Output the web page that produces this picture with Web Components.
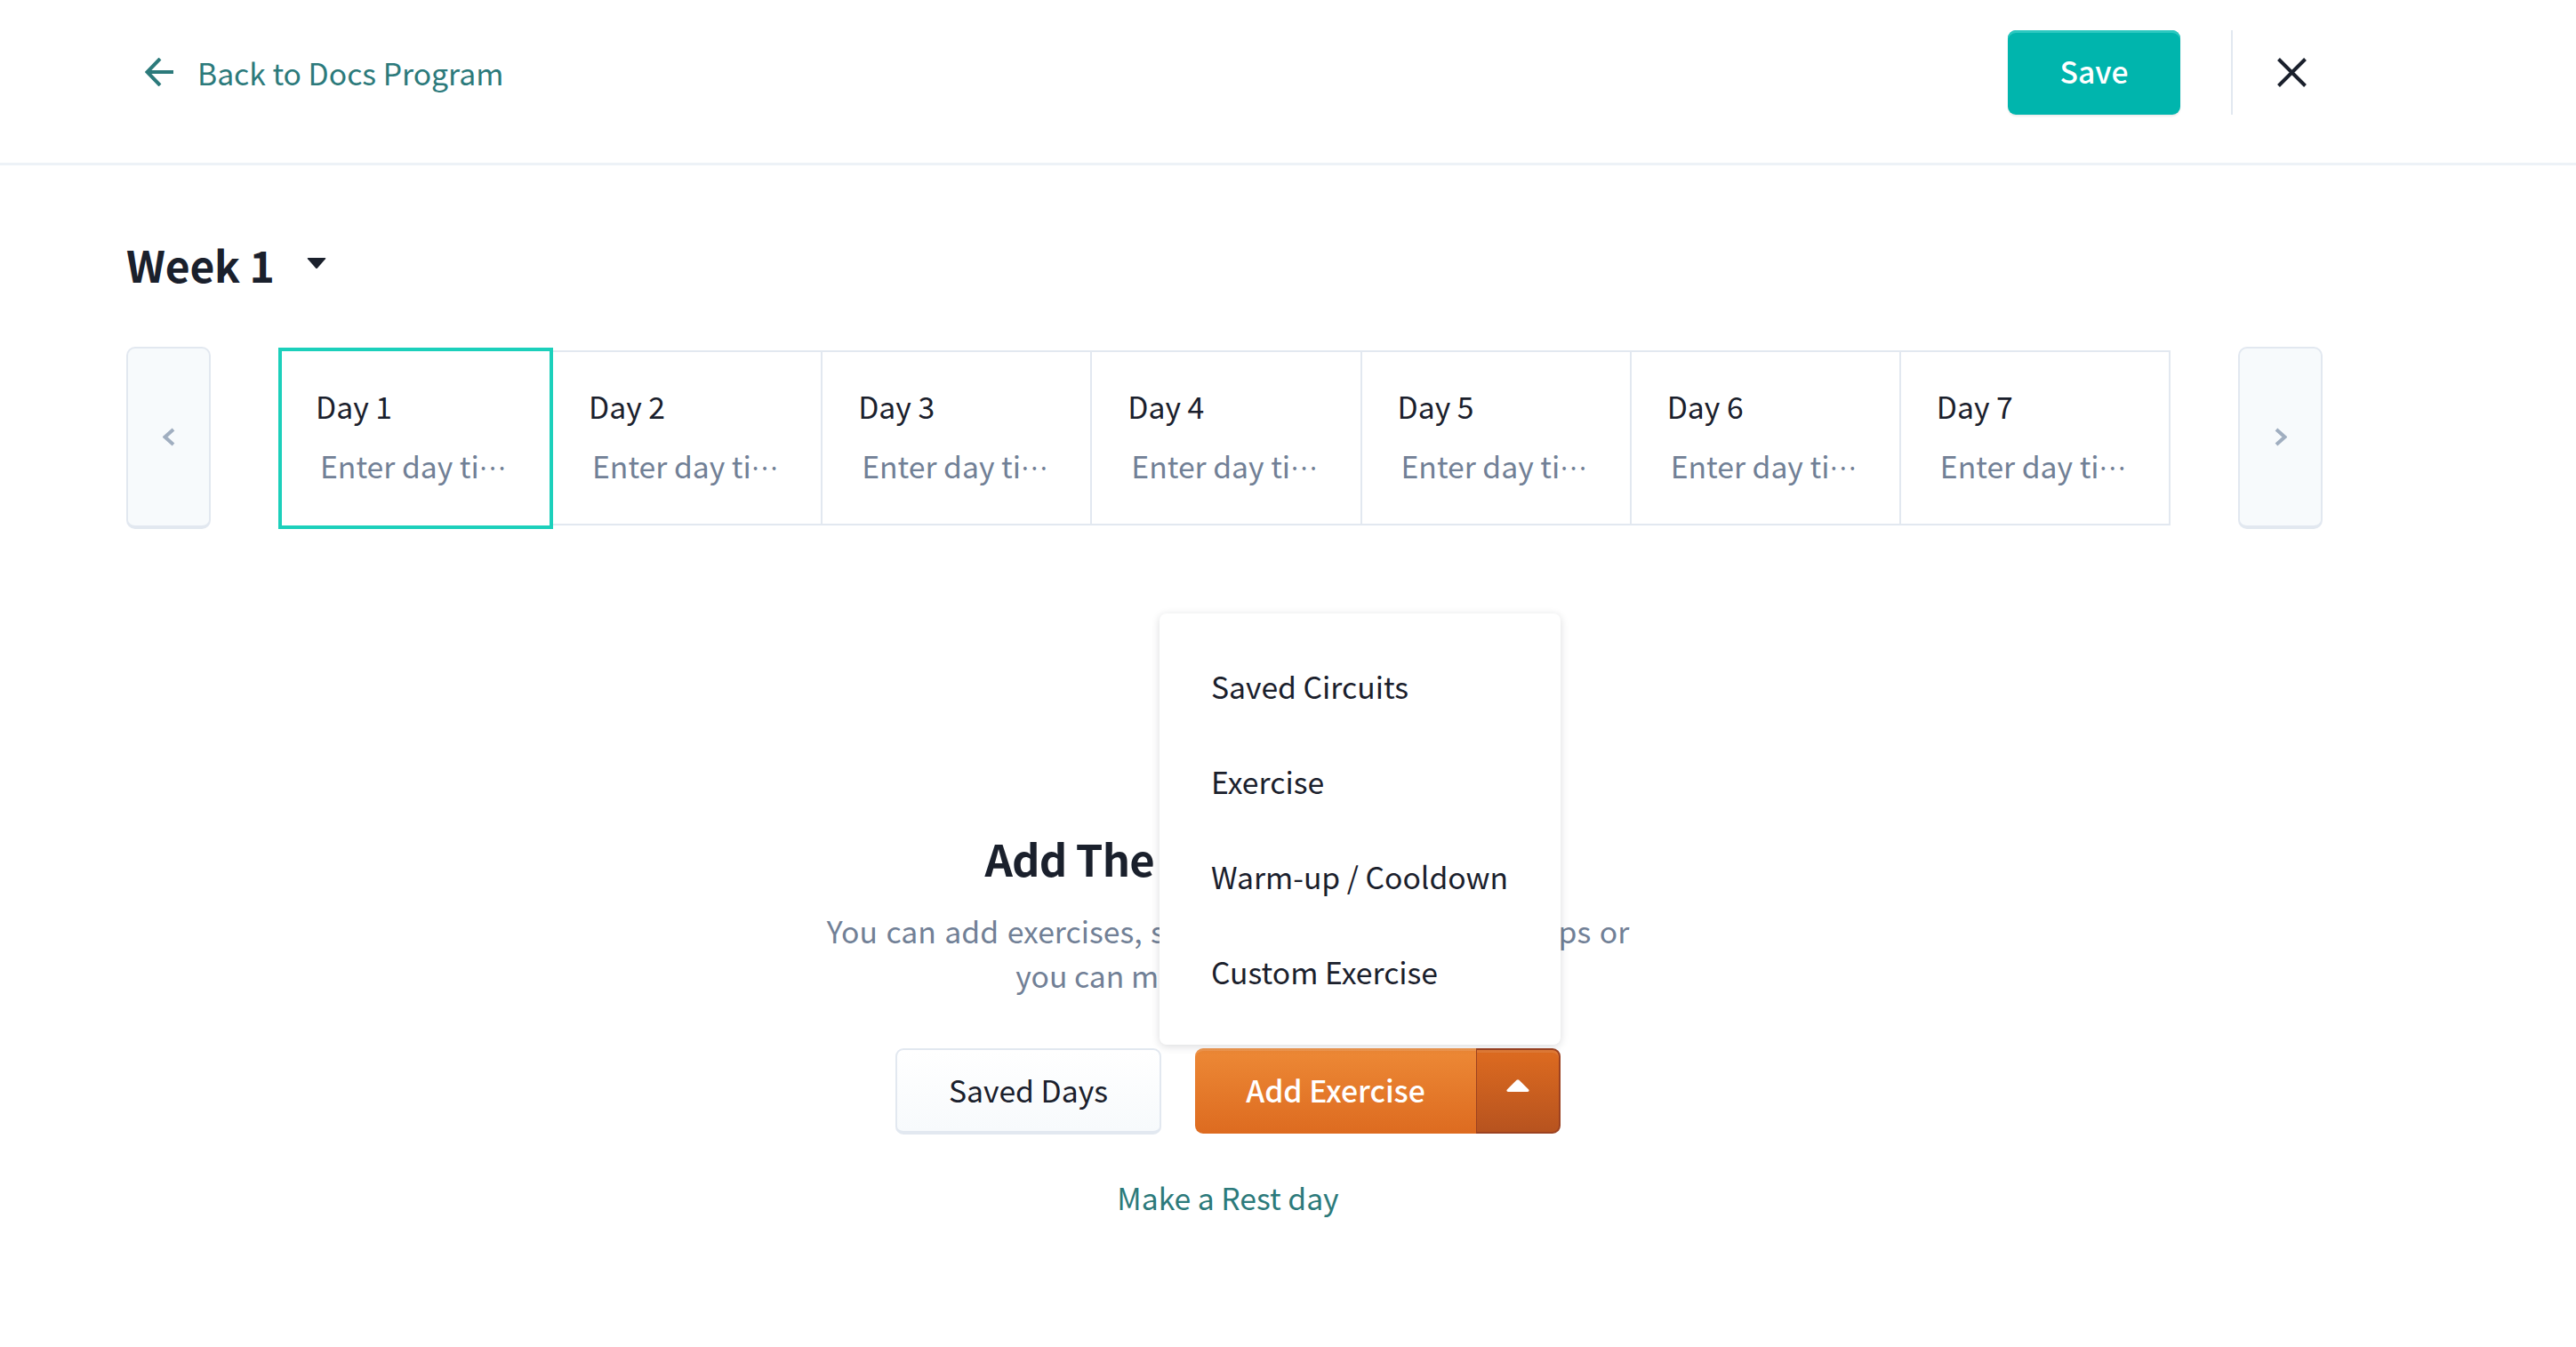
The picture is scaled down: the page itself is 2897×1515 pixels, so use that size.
<!DOCTYPE html>
<html lang="en">
<head>
<meta charset="utf-8">
<title>Day editor</title>
<style>
    html, body { margin: 0; background: #fff; }
    body {
        font-family: "Noto Sans CJK SC", "Noto Sans", sans-serif;
        font-size: 33.7px;
        color: #1a202c;
    }
</style>
</head>
<body>
<day-editor></day-editor>

<script>
class TopBar extends HTMLElement {
    static get tag() { return 'top-bar'; }
    connectedCallback() {
        this.attachShadow({mode: 'open'}).innerHTML = `
<style>
    :host {
        display: flex;
        align-items: flex-start;
        height: 186px;
        padding: 34px 303px 0 163px;
        box-sizing: border-box;
        border-bottom: 3px solid #edf2f7;
    }
    .back {
        display: flex;
        align-items: center;
        gap: 27px;
        height: 95px;
        color: #2c7a7b;
        line-height: 50px;
    }
    .back svg { display: block; margin-top: -1px; }
    .save {
        margin-left: auto;
        width: 194px;
        height: 95px;
        border-radius: 9px;
        background: #00b5ad;
        box-shadow: inset 0 3px 0 #2cc8c0, 0 2px 2px rgba(0,0,0,.08);
        color: #fff;
        font-weight: 500;
        line-height: 92px;
        text-align: center;
    }
    .divider {
        width: 2px;
        height: 95px;
        margin: 0 50px 0 57px;
        background: #e2e8f0;
    }
    .close { display: block; margin-top: 31px; }
</style>
<div class="back">
    <svg width="32" height="32" viewBox="0 0 32 32" fill="none" stroke="#2c7a7b" stroke-width="4"><path d="M17 1 L2.5 16 L17 31"/><path d="M3 16 H32"/></svg>
    <span>Back to Docs Program</span>
</div>
<div class="save">Save</div>
<div class="divider"></div>
<svg class="close" width="33" height="33" viewBox="0 0 33 33" fill="none" stroke="#1a202c" stroke-width="4"><path d="M1.5 1.5 L31.5 31.5 M31.5 1.5 L1.5 31.5"/></svg>
        `;
    }
}

class WeekTitle extends HTMLElement {
    static get tag() { return 'week-title'; }
    connectedCallback() {
        this.attachShadow({mode: 'open'}).innerHTML = `
<style>
    :host {
        display: flex;
        align-items: center;
        gap: 36px;
        height: 70px;
        font-size: 48px;
        letter-spacing: -.2px;
        font-weight: 600;
        line-height: 68px;
    }
    svg { display: block; margin-top: -2px; }
</style>
<span><slot></slot></span>
<svg width="22" height="12" viewBox="0 0 22 12"><path d="M1.5 0 H20.5 Q22 0 21 1.3 L12 11.4 Q11 12.4 10 11.4 L1 1.3 Q0 0 1.5 0 Z" fill="#1a202c"/></svg>
        `;
    }
}

class DayTab extends HTMLElement {
    static get tag() { return 'day-tab'; }
    connectedCallback() {
        this.attachShadow({mode: 'open'}).innerHTML = `
<style>
    :host {
        display: block;
        box-sizing: border-box;
        width: 303.17px;
        height: 197px;
        padding: 0 0 0 38px;
        border: 2px solid #e2e8f0;
        border-left-width: 0;
    }
    :host([selected]) {
        width: 309px;
        height: 204px;
        padding-left: 38px;
        border: 4px solid #1cd0bb;
    }
    .name { line-height: 50px; margin-top: 36px; padding-left: 2px; }
    :host([selected]) .name { margin-top: 37px; padding-left: 0; }
    .title {
        line-height: 50px;
        margin-top: 17px;
        padding-left: 6px;
        color: #718096;
        white-space: nowrap;
    }
    :host([selected]) .title { padding-left: 5px; }
    .dots { font-size: 28px; line-height: 0; vertical-align: 9px; }
</style>
<div class="name"><slot></slot></div>
<div class="title">Enter day ti<span class="dots">⋯</span></div>
        `;
    }
}

class PagerButton extends HTMLElement {
    static get tag() { return 'pager-button'; }
    connectedCallback() {
        let d = this.getAttribute('dir') === 'next' ? 'M2 2 L11.5 10.5 L2 19' : 'M12 2 L2.5 10.5 L12 19';
        this.attachShadow({mode: 'open'}).innerHTML = `
<style>
    :host {
        display: flex;
        align-items: center;
        justify-content: center;
        box-sizing: border-box;
        width: 95px;
        height: 205px;
        background: #f7fafc;
        border: 2px solid #e2e8f0;
        border-bottom-width: 4px;
        border-radius: 10px;
    }
</style>
<svg width="14" height="21" viewBox="0 0 14 21" fill="none" stroke="#a0aec0" stroke-width="4"><path d="${d}"/></svg>
        `;
    }
}

class DayStrip extends HTMLElement {
    static get tag() { return 'day-strip'; }
    connectedCallback() {
        this.attachShadow({mode: 'open'}).innerHTML = `
<style>
    :host {
        display: flex;
        align-items: center;
        justify-content: space-between;
    }
    .days { display: flex; align-items: center; }
</style>
<pager-button dir="prev"></pager-button>
<div class="days"><slot></slot></div>
<pager-button dir="next"></pager-button>
        `;
    }
}

class AddMenu extends HTMLElement {
    static get tag() { return 'add-menu'; }
    connectedCallback() {
        this.attachShadow({mode: 'open'}).innerHTML = `
<style>
    :host {
        position: absolute;
        right: 0;
        bottom: 100px;
        box-sizing: border-box;
        width: 451px;
        height: 485px;
        padding: 28px 0 0 58px;
        background: #fff;
        color: #1a202c;
        text-align: left;
        border-radius: 8px;
        box-shadow: 0 2px 10px rgba(26,32,44,.16);
    }
    ::slotted(div) {
        height: 107px;
        line-height: 107px;
        white-space: nowrap;
    }
</style>
<slot></slot>
        `;
    }
}

class SplitButton extends HTMLElement {
    static get tag() { return 'split-button'; }
    connectedCallback() {
        this.attachShadow({mode: 'open'}).innerHTML = `
<style>
    :host {
        position: relative;
        display: flex;
        width: 411px;
        height: 96px;
        color: #fff;
    }
    .main {
        flex: 1;
        line-height: 94px;
        font-weight: 500;
        white-space: nowrap;
        text-align: center;
        border-radius: 9px 0 0 9px;
        background: linear-gradient(#ed8936, #dd6b20);
        box-shadow: inset 0 3px 0 rgba(255,255,255,.12);
    }
    .arrow {
        display: flex;
        justify-content: center;
        box-sizing: border-box;
        width: 95px;
        padding-top: 33px;
        border: 1px solid #9c4221;
        border-width: 2px 2px 2px 1px;
        border-radius: 0 9px 9px 0;
        background: linear-gradient(#dd6b20, #b7531f);
        box-shadow: inset 0 3px 0 rgba(255,255,255,.1);
    }
    svg { display: block; }
</style>
<div class="main"><slot></slot></div>
<div class="arrow">
    <svg width="26" height="14" viewBox="0 0 26 14"><path d="M11.6 .8 Q13 -.4 14.4 .8 L25.2 11.4 Q26.4 14 24 14 H2 Q-.4 14 .8 11.4 Z" fill="#fff"/></svg>
</div>
<slot name="menu"></slot>
        `;
    }
}

class EmptyState extends HTMLElement {
    static get tag() { return 'empty-state'; }
    connectedCallback() {
        this.attachShadow({mode: 'open'}).innerHTML = `
<style>
    :host {
        display: flex;
        flex-direction: column;
        align-items: center;
        padding-left: 8px;
        text-align: center;
    }
    h2 {
        margin: 0;
        padding-right: 18px;
        font-size: 49px;
        letter-spacing: -.8px;
        font-weight: 600;
        line-height: 70px;
    }
    p {
        margin: 22px 0 0;
        color: #718096;
        line-height: 50px;
        white-space: nowrap;
    }
    p span { word-spacing: 2px; }
    .actions {
        display: flex;
        align-items: flex-start;
        gap: 38px;
        margin-top: 57px;
    }
    .saved {
        box-sizing: border-box;
        width: 299px;
        height: 97px;
        border: 2px solid #e2e8f0;
        border-bottom-width: 4px;
        border-radius: 9px;
        background: linear-gradient(#fff, #f7fafc);
        line-height: 90px;
    }
    .rest {
        margin-top: 46px;
        color: #2c7a7b;
        line-height: 50px;
    }
</style>
<h2>Add The First Exercises</h2>
<p><span>You can add exercises, supersets, circuits or warm-ups or</span><br>you can mark this as a rest day</p>
<div class="actions">
    <div class="saved">Saved Days</div>
    <split-button>Add Exercise
        <add-menu slot="menu">
            <div>Saved Circuits</div>
            <div>Exercise</div>
            <div>Warm-up / Cooldown</div>
            <div>Custom Exercise</div>
        </add-menu>
    </split-button>
</div>
<div class="rest">Make a Rest day</div>
        `;
    }
}

class DayEditor extends HTMLElement {
    static get tag() { return 'day-editor'; }
    connectedCallback() {
        this.attachShadow({mode: 'open'}).innerHTML = `
<style>
    :host { display: block; }
    .page { padding: 0 285px 0 142px; }
    week-title { margin-top: 76px; }
    day-strip { margin-top: 58px; }
    empty-state { margin-top: 335px; }
</style>
<top-bar></top-bar>
<div class="page">
    <week-title>Week 1</week-title>
    <day-strip>
        <day-tab selected>Day 1</day-tab>
        <day-tab>Day 2</day-tab>
        <day-tab>Day 3</day-tab>
        <day-tab>Day 4</day-tab>
        <day-tab>Day 5</day-tab>
        <day-tab>Day 6</day-tab>
        <day-tab>Day 7</day-tab>
    </day-strip>
    <empty-state></empty-state>
</div>
        `;
    }
}

[TopBar, WeekTitle, DayTab, PagerButton, DayStrip, AddMenu, SplitButton, EmptyState, DayEditor]
    .forEach(c => customElements.define(c.tag, c));
</script>
</body>
</html>
